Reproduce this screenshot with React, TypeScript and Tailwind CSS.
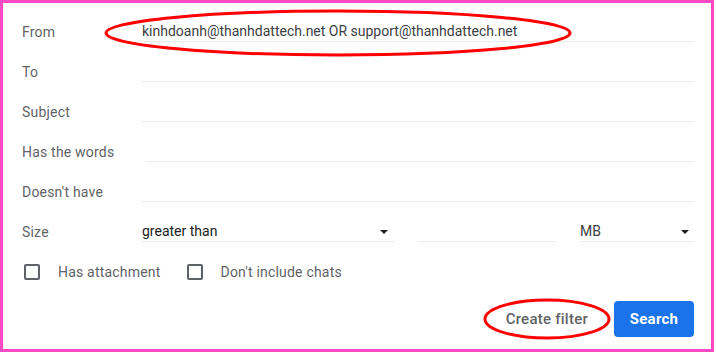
import React from "react";

const Arrow = () => (
  <svg width="8" height="4" viewBox="0 0 8 4" className="shrink-0">
    <path d="M0 0 L8 0 L4 4 Z" fill="#202124" />
  </svg>
);

function Row({ label, value, offset }: { label: string; value?: string; offset?: boolean }) {
  return (
    <div className="flex h-10 items-center">
      <div className="w-[120px] shrink-0 text-[14px] tracking-[0.2px] text-[#5f6368]">{label}</div>
      <div
        className={
          "flex h-5 flex-1 items-center border-b border-[#e8eaed] text-[14px] text-[#3c4043] " +
          (offset ? "ml-[4px]" : "")
        }
      >
        <span>{value}</span>
      </div>
    </div>
  );
}

function Check({ label }: { label: string }) {
  return (
    <div className="flex items-center">
      <div className="h-[16px] w-[16px] rounded-[2px] border-2 border-[#5f6368]" />
      <span className="ml-[18px] text-[14px] tracking-[0.2px] text-[#5f6368]">{label}</span>
    </div>
  );
}

export default function App() {
  return (
    <div className="h-[354px] w-[716px] bg-white" style={{ fontFamily: "Roboto, 'Liberation Sans', Arial, sans-serif" }}>
      <div className="relative h-[352px] w-[714px] border-[3px] border-[#fb4ac4] bg-white pl-[19px] pr-[17px] pt-[9px]">
        <Row label="From" value="kinhdoanh@thanhdattech.net OR support@thanhdattech.net" />
        <Row label="To" />
        <Row label="Subject" />
        <Row label="Has the words" offset />
        <Row label="Doesn't have" />
        <div className="flex h-10 items-center">
          <div className="w-[120px] shrink-0 text-[14px] tracking-[0.2px] text-[#5f6368]">Size</div>
          <div className="flex h-5 w-[252px] items-center justify-between border-b border-[#e8eaed] pr-[6px] text-[14px] text-[#202124]">
            <span>greater than</span>
            <Arrow />
          </div>
          <div className="ml-6 h-5 w-[138px] border-b border-[#e8eaed]" />
          <div className="ml-6 flex h-5 flex-1 items-center justify-between border-b border-[#e8eaed] pr-[5px] text-[14px] text-[#3c4043]">
            <span>MB</span>
            <Arrow />
          </div>
        </div>
        <div className="flex h-10 items-center pl-[2px]">
          <Check label="Has attachment" />
          <div className="ml-[26px]">
            <Check label="Don't include chats" />
          </div>
        </div>
        <div className="mt-[9px] flex justify-end">
          <button className="mr-[2px] h-9 px-6 text-[15px] font-medium tracking-[0.25px] text-[#5f6368]">Create filter</button>
          <button className="h-9 w-[80px] rounded-[4px] bg-[#1a73e8] text-[15px] font-bold tracking-[0.25px] text-white">Search</button>
        </div>
        <svg className="pointer-events-none absolute left-[-3px] top-[-3px]" width="716" height="354">
          <ellipse cx="338" cy="33" rx="232" ry="22" fill="none" stroke="#fe0000" strokeWidth="3" />
          <ellipse cx="547" cy="319" rx="62" ry="19" fill="none" stroke="#fe0000" strokeWidth="3" />
        </svg>
      </div>
    </div>
  );
}
